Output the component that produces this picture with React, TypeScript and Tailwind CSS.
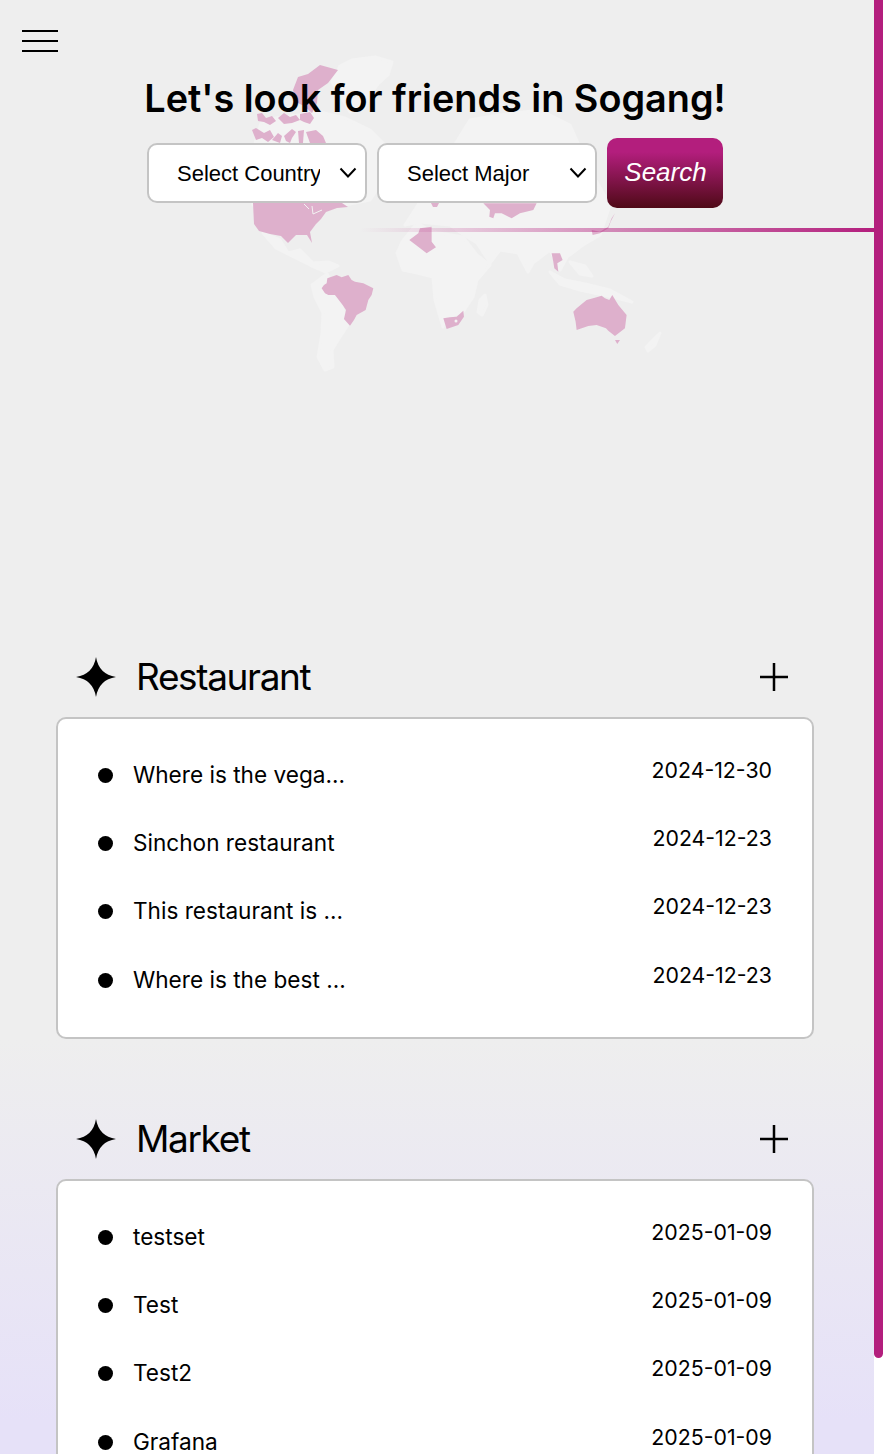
const sections = [
  {
    title: 'Restaurant',
    posts: [
      { label: 'Where is the vega...', date: '2024-12-30' },
      { label: 'Sinchon restaurant', date: '2024-12-23' },
      { label: 'This restaurant is ...', date: '2024-12-23' },
      { label: 'Where is the best ...', date: '2024-12-23' },
    ],
  },
  {
    title: 'Market',
    posts: [
      { label: 'testset', date: '2025-01-09' },
      { label: 'Test', date: '2025-01-09' },
      { label: 'Test2', date: '2025-01-09' },
      { label: 'Grafana', date: '2025-01-09' },
    ],
  },
];

// page coordinates
const LAND = [
  'M340 66 L352 60 L375 57 L392 62 L388 75 L378 84 L372 92 L365 108 L350 112 L340 95 L332 82 Z',
  'M262 120 L320 112 L345 118 L370 130 L385 145 L390 170 L370 200 L345 205 L253 205 L253 150 Z',
  'M263 233 L280 240 L288 253 L300 250 L313 263 L328 262 L338 266 L326 272 L312 266 L292 256 L276 248 Z',
  'M312 285 L327 274 L330 280 L340 300 L348 325 L340 337 L332 350 L333 367 L325 370 L318 357 L322 333 L323 313 L315 297 Z',
  'M397 253 L402 242 L417 223 L433 232 L463 237 L477 255 L490 265 L477 280 L473 297 L463 312 L445 318 L443 327 L435 300 L433 277 L417 273 L403 270 Z',
  'M480 300 L485 295 L487 305 L482 315 L478 312 Z',
  'M405 225 L418 205 L430 185 L470 120 L500 115 L540 110 L570 125 L590 170 L610 205 L600 235 L583 245 L567 257 L560 270 L550 250 L533 263 L528 272 L518 253 L500 250 L490 263 L477 243 L467 237 L450 225 L420 222 Z',
  'M550 272 L565 280 L585 284 L610 290 L632 302 L608 296 L580 290 L560 284 Z',
  'M570 262 L585 266 L592 276 L580 274 Z',
  'M646 347 L660 333 L655 345 L648 351 Z',
];

const VISITED = [
  'M298 77 L308 74 L320 65 L338 70 L328 83 L318 90 L317 103 L312 113 L304 106 L296 102 L293 90 Z',
  'M257 114 L262 113 L266 118 L272 116 L276 121 L270 125 L264 122 L258 121 Z',
  'M278 118 L284 113 L290 117 L296 115 L300 120 L292 123 L284 124 Z',
  'M300 114 L310 112 L314 118 L310 124 L304 122 L300 120 Z',
  'M252 130 L256 128 L264 133 L270 130 L274 137 L268 142 L262 138 L256 140 Z',
  'M272 140 L278 133 L282 136 L280 143 Z',
  'M284 136 L292 129 L296 132 L292 138 L290 143 L286 141 Z',
  'M298 131 L304 130 L303 143 L299 143 Z',
  'M306 132 L316 130 L323 136 L326 143 L310 143 Z',
  'M253 203 L342 203 L348 207 L337 208 L326 212 L321 219 L316 224 L310 232 L312 243 L307 235 L296 235 L288 243 L281 236 L270 234 L259 231 L254 224 Z',
  'M431 203 L439 203 L437 207 L433 207 Z',
];

// crop coordinates: page x = 200 + x / 3, page y = 200 + y / 3
const VISITED_SOUTH = [
  'M365 265 L372 255 L380 250 L382 235 L410 225 L425 232 L445 225 L455 240 L465 245 L490 250 L520 265 L515 285 L505 300 L497 330 L470 345 L462 360 L450 377 L432 357 L438 330 L428 315 L405 285 L385 285 L375 280 Z',
  'M660 85 L695 80 L695 125 L708 142 L680 160 L628 120 L655 100 Z',
  'M730 355 L750 352 L770 350 L790 332 L792 350 L775 375 L740 387 Z',
  'M1120 335 L1130 325 L1160 300 L1190 292 L1205 287 L1215 295 L1228 300 L1237 285 L1255 315 L1280 345 L1275 385 L1245 408 L1225 392 L1218 385 L1190 375 L1165 378 L1130 390 L1127 365 Z',
  'M1245 420 L1260 420 L1252 432 Z',
  'M1055 160 L1080 160 L1088 180 L1072 190 L1075 215 L1063 205 L1060 185 Z',
  'M1245 40 L1235 55 L1225 80 L1200 95 L1175 90 L1178 105 L1200 100 L1225 85 L1232 65 Z',
  'M850 10 L1010 10 L1000 30 L960 40 L935 55 L905 40 L885 40 L880 55 L868 50 L870 30 Z',
];

const WorldMap = () => (
  <svg className="absolute left-0 top-0" width="874" height="400" viewBox="0 0 874 400">
    {LAND.map((d) => (
      <path key={d} d={d} fill="#f3f3f3" stroke="#f3f3f3" strokeWidth="3" strokeLinejoin="round" />
    ))}
    {VISITED.map((d) => (
      <path key={d} d={d} fill="#deb0cc" />
    ))}
    <path d="M304 204 L309 209 M312 206 L313 214 L322 210" fill="none" stroke="#f3f3f3" strokeWidth="1" />
    <g transform="translate(200 200) scale(0.3333)">
      {VISITED_SOUTH.map((d) => (
        <path key={d} d={d} fill="#deb0cc" />
      ))}
    </g>
    <circle cx="456" cy="321" r="1.5" fill="#f3f3f3" />
  </svg>
);

const Chevron = () => (
  <svg
    className="pointer-events-none absolute right-[10px] top-[24px]"
    width="18"
    height="12"
    viewBox="0 0 18 12"
    fill="none"
    stroke="#000"
    strokeWidth="2"
  >
    <path d="M1.5 1.5 L9 9.5 L16.5 1.5" />
  </svg>
);

const Select = ({ label }: { label: string }) => (
  <div className="relative h-[60px] w-[220px]">
    <select className="h-full w-full appearance-none rounded-[10px] border-2 border-[#c4c4c4] bg-white pl-[28px] pr-[45px] font-['Liberation_Sans',sans-serif] text-[22px] text-black outline-none">
      <option>{label}</option>
    </select>
    <Chevron />
  </div>
);

const Star = () => (
  <svg width="40" height="40" viewBox="0 0 40 40">
    <path d="M20 0 Q22.8 17.2 40 20 Q22.8 22.8 20 40 Q17.2 22.8 0 20 Q17.2 17.2 20 0 Z" fill="#000" />
  </svg>
);

const Plus = () => (
  <svg width="28" height="28" viewBox="0 0 28 28" stroke="#000" strokeWidth="2.5">
    <path d="M0 14 H28 M14 0 V28" />
  </svg>
);

export default function App() {
  return (
    <div className="flex h-[1454px] overflow-hidden bg-white font-['Inter',sans-serif] text-black">
      <main className="relative w-[874px] bg-[linear-gradient(180deg,#eeeeee_1040px,#e6e1f8_1420px)]">
        <WorldMap />
        <div className="absolute left-[360px] right-0 top-[228px] h-[4px] bg-gradient-to-r from-transparent to-[#b31e7d]" />

        <div className="relative">
          <div className="flex flex-col gap-[8px] pl-[22px] pt-[30px]">
            <span className="h-[2px] w-[36px] bg-black" />
            <span className="h-[2px] w-[36px] bg-black" />
            <span className="h-[2px] w-[36px] bg-black" />
          </div>

          <h1 className="mt-[23px] pr-[4px] text-center text-[37.8px] font-semibold leading-[46px]">
            Let's look for friends in Sogang!
          </h1>

          <div className="mt-[17px] flex items-center justify-center gap-[10px] pr-[4px]">
            <Select label="Select Country" />
            <Select label="Select Major" />
            <button className="h-[70px] w-[116px] rounded-[10px] bg-[linear-gradient(180deg,#b31e7d_20%,#4f0a17_100%)] pb-[2px] pl-[1px] font-['Liberation_Sans',sans-serif] text-[26px] italic text-white">
              Search
            </button>
          </div>
        </div>

        <div className="relative mt-[449px] flex flex-col gap-[80px] pl-[56px] pr-[60px]">
          {sections.map((section) => (
            <section key={section.title}>
              <div className="flex h-[40px] items-center pl-[20px] pr-[26px]">
                <Star />
                <h2 className="ml-[20px] flex-1 text-[37px] font-normal leading-[40px] tracking-[-0.037em]">
                  {section.title}
                </h2>
                <Plus />
              </div>
              <ul className="mt-[20px] rounded-[10px] border-2 border-[#c4c4c4] bg-white pb-[22.68px] pl-[40px] pr-[40px] pt-[22px]">
                {section.posts.map((post) => (
                  <li key={post.label} className="flex h-[68.33px] items-center">
                    <span className="h-[15px] w-[15px] rounded-full bg-black" />
                    <span className="mb-[1px] ml-[20px] flex-1 text-[22.6px]">{post.label}</span>
                    <span className="mb-[9px] text-[21.3px]">{post.date}</span>
                  </li>
                ))}
              </ul>
            </section>
          ))}
        </div>
      </main>
      <aside className="w-[9px] bg-white">
        <div className="h-[1358px] rounded-b-full bg-[#b31e7d]" />
      </aside>
    </div>
  );
}
